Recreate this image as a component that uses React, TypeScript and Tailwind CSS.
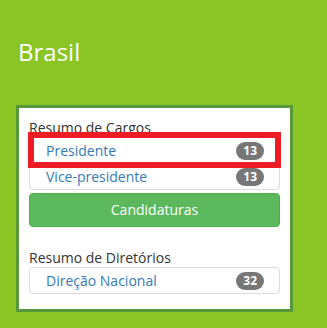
const cargos = [
  { nome: "Presidente", total: 13 },
  { nome: "Vice-presidente", total: 13 },
];

const diretorios = [{ nome: "Direção Nacional", total: 32 }];

function Badge({ n }: { n: number }) {
  return (
    <span className="rounded-[10px] bg-[#777777] px-[7px] py-[3px] text-[12px] font-bold leading-none text-white">
      {n}
    </span>
  );
}

function Lista({ itens }: { itens: { nome: string; total: number }[] }) {
  return (
    <ul>
      {itens.map((item, i) => (
        <li
          key={item.nome}
          className={
            "-mb-px flex items-center justify-between border border-[#dddddd] bg-white py-[3px] pl-[16px] pr-[15px] leading-[19px] " +
            (i === 0 ? "rounded-t-[4px] " : "") +
            (i === itens.length - 1 ? "rounded-b-[4px]" : "")
          }
        >
          <a className="text-[14px] text-[#337ab7]" href="#">
            {item.nome}
          </a>
          <Badge n={item.total} />
        </li>
      ))}
    </ul>
  );
}

export default function App() {
  return (
    <div className="min-h-[328px] bg-[#8bc425] pl-[16px] pt-[35px] font-['Open_Sans',sans-serif]">
      <h1 className="ml-[2px] text-[24px] leading-[33px] text-white">Brasil</h1>

      <div className="relative mt-[37px] w-[277px] border-[3px] border-[#57983a] bg-white px-[10px] pb-[16px] pt-[11px]">
        <h4 className="text-[14px] leading-[17px] text-[#333333]">Resumo de Cargos</h4>
        <div className="mt-[1px]">
          <Lista itens={cargos} />
        </div>
        <button className="mt-[4px] w-full rounded-[4px] border border-[#4cae4c] bg-[#5cb85c] py-[6px] text-[14px] leading-5 text-white">
          Candidaturas
        </button>

        <h4 className="mt-[22px] text-[14px] leading-[17px] text-[#333333]">Resumo de Diretórios</h4>
        <div className="mt-[1px]">
          <Lista itens={diretorios} />
        </div>

        <div className="absolute left-[9px] top-[24px] h-[36px] w-[253px] border-[6px] border-[#ed1c24]" />
      </div>
    </div>
  );
}
